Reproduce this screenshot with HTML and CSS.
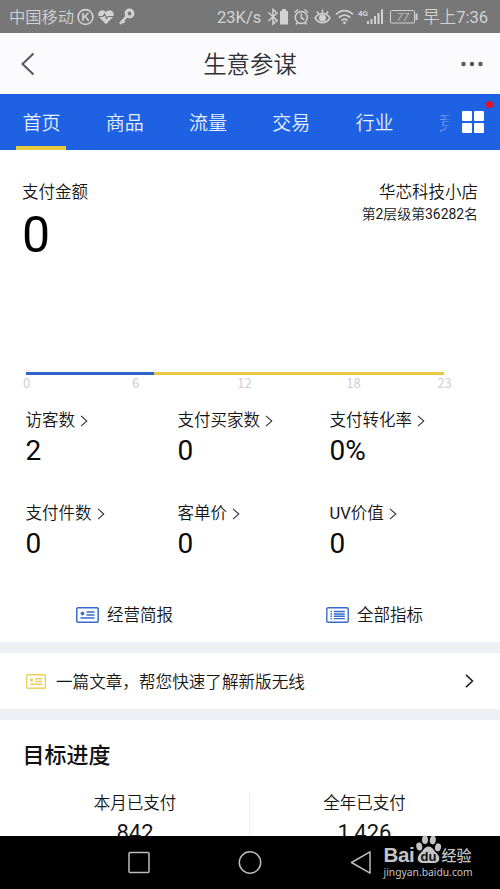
FILE: index.html
```html
<!DOCTYPE html>
<html lang="zh-CN">
<head>
<meta charset="utf-8">
<title>生意参谋</title>
<link rel="stylesheet" href="styles.css">
</head>
<body>
<div class="screen">
  <div class="status">
    <span class="carrier">中国移动</span>
    <svg class="status-left" width="60" height="20" viewBox="76 7 60 20" fill="none" stroke="#d2d2d2">
      <circle cx="85.500" cy="17" r="7.400" stroke-width="1.600"/>
      <path d="M83 13v8M88.500 13l-5 4.400M85 16.200l3.800 4.800" stroke-width="1.600"/>
      <path d="M106 24.300l-7-7.200c-3-5 3.500-9.500 7-5 3.500-4.500 10 0 7 5z" fill="#d2d2d2" stroke="none"/>
      <path d="M98 16.500h5l1.500-2.500 2 4.500 1.500-2h6" stroke="#777" stroke-width="1.200"/>
      <circle cx="129.500" cy="13.500" r="3.400" stroke-width="3"/>
      <path d="M127 16l-7 7.800M122 20.500l2.500 2" stroke-width="2.600"/>
    </svg>
    <span class="speed">23K/s</span>
    <svg class="status-right" width="152" height="24" viewBox="267 5 152 24" fill="none" stroke="#d2d2d2" stroke-width="1.500">
      <path d="M268.500 12.500l8.500 8-4 3.500V9.500l4 3.500-8.500 8"/>
      <path d="M280 11h2v-2h4v2h2v13.500h-8z" fill="#d2d2d2" stroke="none"/>
      <circle cx="301.300" cy="17.500" r="6"/>
      <path d="M301.300 13.500v4.300l3 1.700M294.500 12.500l3.500-3M304.500 9.500l3.500 3M297.500 22.500l-1.500 2M305 22.500l1.500 2"/>
      <path d="M315 18c4-6 11-6 15 0-4 6.300-11 6.300-15 0zM317 11.500l2 3M322.500 9.500v4M328 11.500l-2 3"/>
      <circle cx="322.500" cy="18" r="2.700" fill="#d2d2d2"/>
      <path d="M336 14.500c5-5.300 12-5.300 17 0M338.800 17.700c3.500-3.500 8-3.500 11.500 0M341.500 20.600c2-1.900 4-1.900 6 0" stroke-width="1.800"/>
      <circle cx="344.500" cy="22.800" r="1.400" fill="#d2d2d2" stroke="none"/>
      <text class="net" x="358" y="15.500">4G</text>
      <path d="M368 24v-3M371.500 24v-5M375 24v-8M378.500 24V13M382 24V9.500" stroke-width="2"/>
      <rect x="390.500" y="10.500" width="24" height="12.500" rx="1" stroke-width="1"/>
      <path d="M416.500 13.500v6.500" stroke-width="2"/>
      <text class="battery" x="396.500" y="21">77</text>
    </svg>
    <span class="clock">早上<span class="latin">7:36</span></span>
  </div>
  <header class="header">
    <svg class="back" width="16" height="24" viewBox="0 0 16 24"><path d="M13.500 1.500L2.500 12l11 10.500" fill="none" stroke="#55565c" stroke-width="2"/></svg>
    <h1>生意参谋</h1>
    <svg class="more" width="22" height="6" viewBox="0 0 22 6" fill="#55565c"><circle cx="2.500" cy="3" r="2.200"/><circle cx="11" cy="3" r="2.200"/><circle cx="19.500" cy="3" r="2.200"/></svg>
  </header>
  <nav class="tabs">
    <span class="tab active">首页</span><span class="tab">商品</span><span class="tab">流量</span><span class="tab">交易</span><span class="tab">行业</span><span class="tab faded">竞</span>
    <div class="grid-button"><i></i><i></i><i></i><i></i></div>
    <b class="dot"></b>
  </nav>
  <section class="overview">
    <div class="summary">
      <div><div class="label">支付金额</div><div class="amount">0</div></div>
      <div class="shop"><div class="label">华芯科技小店</div><div class="rank">第<span class="latin">2</span>层级第<span class="latin">36282</span>名</div></div>
    </div>
    <div class="chart">
      <div class="line"></div>
      <div class="axis"><span>0</span><span>6</span><span>12</span><span>18</span><span>23</span></div>
    </div>
    <div class="metrics">
      <div><div class="name">访客数<svg viewBox="0 0 8 12"><path d="M1 .8L6.800 6 1 11.200"/></svg></div><div class="value">2</div></div>
      <div><div class="name">支付买家数<svg viewBox="0 0 8 12"><path d="M1 .8L6.800 6 1 11.200"/></svg></div><div class="value">0</div></div>
      <div><div class="name">支付转化率<svg viewBox="0 0 8 12"><path d="M1 .8L6.800 6 1 11.200"/></svg></div><div class="value">0%</div></div>
      <div><div class="name">支付件数<svg viewBox="0 0 8 12"><path d="M1 .8L6.800 6 1 11.200"/></svg></div><div class="value">0</div></div>
      <div><div class="name">客单价<svg viewBox="0 0 8 12"><path d="M1 .8L6.800 6 1 11.200"/></svg></div><div class="value">0</div></div>
      <div><div class="name"><span><span class="latin">UV</span>价值</span><svg viewBox="0 0 8 12"><path d="M1 .8L6.800 6 1 11.200"/></svg></div><div class="value">0</div></div>
    </div>
    <div class="links">
      <div class="link"><svg width="23" height="16" viewBox="0 0 23 16" fill="none" stroke="#356bd0" stroke-width="1.500"><rect x=".8" y=".8" width="21.400" height="14.400" rx="1.200"/><circle cx="6.500" cy="6.500" r="1.500" fill="#356bd0" stroke-width="1"/><path d="M10.500 5h8M10.500 8h8M4.500 11h14"/></svg><span>经营简报</span></div>
      <div class="link"><svg width="23" height="16" viewBox="0 0 23 16" fill="none" stroke="#356bd0" stroke-width="1.400"><rect x=".8" y=".8" width="21.400" height="14.400" rx="1.200"/><path d="M4.500 4.500H6M4.500 7H6M4.500 9.300H6M4.500 11.600H6M7.800 4.500h11M7.800 7h11M7.800 9.300h11M7.800 11.600h11"/></svg><span>全部指标</span></div>
    </div>
  </section>
  <section class="article">
    <svg width="20" height="15" viewBox="0 0 23 16" preserveAspectRatio="none" fill="none" stroke="#edcf5d" stroke-width="1.500"><rect x=".8" y=".8" width="21.400" height="14.400" rx="1.200"/><circle cx="6.500" cy="6.500" r="1.500" fill="#edcf5d" stroke-width="1"/><path d="M10.500 5h8M10.500 8h8M4.500 11h14"/></svg>
    <span>一篇文章，帮您快速了解新版无线</span>
    <svg class="go" width="9" height="14" viewBox="0 0 9 14"><path d="M1 .8L7.500 7 1 13.200" fill="none" stroke="#222" stroke-width="1.600"/></svg>
  </section>
  <section class="goals">
    <h2>目标进度</h2>
    <div class="columns">
      <div><div class="goal-name">本月已支付</div><div class="goal-value">842</div></div>
      <div><div class="goal-name">全年已支付</div><div class="goal-value">1,426</div></div>
    </div>
  </section>
  <footer class="navbar">
    <svg width="250" height="40" viewBox="125 842 250 40" fill="none" stroke="#bdbdbd" stroke-width="1.500"><rect x="129" y="852.500" width="20" height="20" rx="1"/><circle cx="250" cy="862.500" r="10.700"/><path d="M370 851.800v21.400l-18.500-10.700z" stroke-linejoin="round"/></svg>
  </footer>
  <div class="watermark">
    <div class="brand"><span class="bai">Bai</span><svg width="27" height="29" viewBox="0 0 27 29"><g fill="#c4c4c4"><ellipse cx="4.300" cy="11.500" rx="3" ry="4" transform="rotate(-12 4.300 11.500)"/><ellipse cx="10" cy="4.800" rx="3" ry="4.300"/><ellipse cx="17.800" cy="5" rx="3" ry="4.300" transform="rotate(8 17.800 5)"/><ellipse cx="23" cy="12.300" rx="3" ry="4" transform="rotate(12 23 12.300)"/><path d="M13.500 11.500c4 0 5 4 8 6.500 5 4.500 3 10.500-3 10h-10c-6 .5-8-5.500-3-10 3-2.500 4-6.500 8-6.500z"/></g><text x="5.500" y="25.500" class="du">du</text></svg><span class="jy">经验</span></div>
    <div class="site">jingyan.baidu.com</div>
  </div>
</div>
</body>
</html>
```
FILE: styles.css
```css
* { box-sizing: border-box; }
body { margin: 0; font-family: Roboto, "Noto Sans CJK SC", sans-serif; color: #151515; }
svg { display: block; flex: none; }
.screen { position: relative; width: 500px; height: 889px; overflow: hidden; background: #fff; display: flex; flex-direction: column; white-space: nowrap; }
.screen > * { flex: none; }
.latin { font-weight: 400; }

.status { height: 33px; background: #777; color: #d2d2d2; display: flex; align-items: center; padding-left: 9px; font-weight: 350; }
.carrier { font-size: 16.300px; width: 67px; line-height: 22px; margin-top: 2px; }
.speed { font-size: 16.500px; margin-left: 81px; width: 50px; font-weight: 400; padding-top: 1px; }
.clock { font-size: 16.600px; line-height: 22px; margin: 2px 0 0 4px; }
.net { font-size: 8px; font-weight: 700; fill: #d2d2d2; stroke: none; }
.battery { font-size: 11.500px; font-style: italic; fill: #d2d2d2; stroke: none; }

.header { height: 61px; background: #fbfbfd; display: flex; align-items: center; justify-content: space-between; padding: 0 17px 0 20px; }
.header h1 { margin: 2px 0 0 3px; font-size: 23.400px; font-weight: 350; line-height: 34px; color: #303137; }

.tabs { position: relative; height: 56px; background: #1f61e3; display: flex; padding-left: 16.400px; color: #e6f0ff; font-size: 19px; font-weight: 350; overflow: hidden; }
.tab { width: 50px; margin-right: 33.300px; flex: none; text-align: center; line-height: 59px; }
.tab.active { border-bottom: 4px solid #e9cc42; }
.tab.faded { width: 19px; margin: 0 0 0 6px; text-align: left; opacity: .45; -webkit-mask: linear-gradient(90deg, #000 15%, transparent 62%); mask: linear-gradient(90deg, #000 15%, transparent 62%); }
.grid-button { display: grid; grid-template-columns: 10px 10px; grid-auto-rows: 10px; gap: 2px; margin: 17px 0 0 4px; }
.grid-button i { background: #fff; border-radius: 1px; }
.dot { position: absolute; left: 486px; top: 7px; width: 7px; height: 7px; border-radius: 50%; background: #f30d1c; }

.overview { height: 492px; padding-top: 30px; }
.summary { display: flex; justify-content: space-between; padding: 0 22px; height: 192px; }
.label { font-size: 16.500px; line-height: 25px; font-weight: 350; }
.amount { font-size: 50px; line-height: 60px; color: #000; }
.shop { text-align: right; }
.rank { font-size: 13.900px; line-height: 18px; font-weight: 350; }
.chart { height: 36px; }
.line { margin-left: 26px; width: 418px; height: 3px; background: linear-gradient(90deg, #2f63c9 127.500px, #e9c944 127.500px); }
.axis { display: grid; grid-template-columns: 109px 109px 109px 109px 73px; margin-left: -28px; text-align: center; font: 13px/15px "Noto Sans CJK SC", sans-serif; color: #d0d0d0; }
.metrics { display: grid; grid-template-columns: 152px 152px 152px; grid-auto-rows: 93px; margin-left: 25.500px; }
.name { display: flex; align-items: center; gap: 5px; font-size: 16.500px; line-height: 25px; font-weight: 350; }
.name svg { width: 8px; height: 12px; fill: none; stroke: #333; stroke-width: 1.100; }
.value { font-size: 28px; line-height: 35px; color: #0a0a0a; }
.links { display: flex; padding-top: 8px; }
.link { width: 250px; padding-left: 76px; display: flex; align-items: center; gap: 8px; font-size: 16.500px; line-height: 25px; font-weight: 350; }
.link span { padding-top: 1px; }

.article { height: 78px; border: solid #eff0f5; border-width: 11px 0; display: flex; align-items: center; padding: 0 26px; font-size: 16.600px; font-weight: 350; }
.article span { margin: 2px 0 0 10px; line-height: 25px; }
.go { margin-left: auto; }

.goals { height: 116px; padding-top: 20px; overflow: hidden; }
.goals h2 { margin: 0 0 0 22.500px; font-size: 22px; line-height: 32px; font-weight: 500; color: #111; }
.columns { display: flex; margin-top: 21px; text-align: center; }
.columns > div { width: 229px; height: 60px; }
.columns > div:first-child { width: 250px; padding-left: 21px; border-right: 1px solid #eee; }
.goal-name { font-size: 16.500px; line-height: 22px; font-weight: 350; }
.goal-value { font-size: 22px; line-height: 36px; }

.navbar { height: 53px; background: #000; padding: 6px 0 0 125px; }
.watermark { position: absolute; left: 383.500px; top: 836px; color: #c4c4c4; }
.brand { display: flex; align-items: flex-end; height: 28px; font: 700 20.500px/18px "Liberation Sans", sans-serif; }
.bai { letter-spacing: -.3px; }
.jy { font: 500 15px/18px "Noto Sans CJK SC", sans-serif; }
.du { font: 700 13px "Liberation Sans", sans-serif; fill: #111; }
.site { font: 10.300px/16px "Noto Sans", sans-serif; }
```
